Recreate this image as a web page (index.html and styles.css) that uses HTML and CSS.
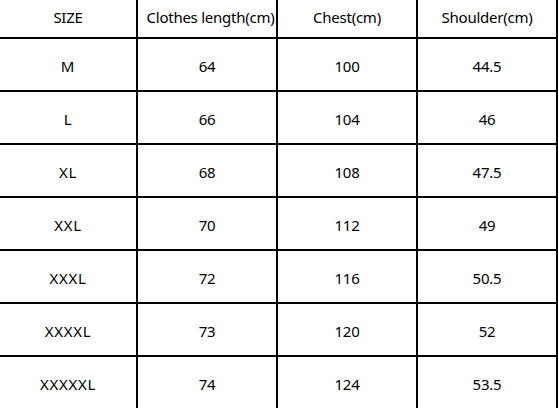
FILE: index.html
```html
<!DOCTYPE html>
<html>
<head>
<meta charset="utf-8">
<link rel="stylesheet" href="styles.css">
</head>
<body>
<div class="table">
  <div class="row head">
    <div class="cell c1">SIZE</div>
    <div class="cell wide">Clothes length(cm)</div>
    <div class="cell">Chest(cm)</div>
    <div class="cell">Shoulder(cm)</div>
  </div>
  <div class="row"><div class="cell c1">M</div><div class="cell">64</div><div class="cell">100</div><div class="cell">44.5</div></div>
  <div class="row"><div class="cell c1">L</div><div class="cell">66</div><div class="cell">104</div><div class="cell">46</div></div>
  <div class="row"><div class="cell c1">XL</div><div class="cell">68</div><div class="cell">108</div><div class="cell">47.5</div></div>
  <div class="row"><div class="cell c1">XXL</div><div class="cell">70</div><div class="cell">112</div><div class="cell">49</div></div>
  <div class="row"><div class="cell c1">XXXL</div><div class="cell">72</div><div class="cell">116</div><div class="cell">50.5</div></div>
  <div class="row"><div class="cell c1">XXXXL</div><div class="cell">73</div><div class="cell">120</div><div class="cell">52</div></div>
  <div class="row"><div class="cell c1">XXXXXL</div><div class="cell">74</div><div class="cell">124</div><div class="cell">53.5</div></div>
</div>
</body>
</html>
```
FILE: styles.css
```css
html, body {
  margin: 0;
  padding: 0;
  background: #fff;
}
body {
  width: 559px;
  height: 408px;
  overflow: hidden;
  font-family: "Noto Sans", "Open Sans", sans-serif;
  font-size: 15px;
  letter-spacing: -0.25px;
  color: #000;
}
.table {
  display: flex;
  flex-direction: column;
}
.row {
  display: grid;
  grid-template-columns: 138px 140px 140px 140px;
  height: 53px;
}
.row.head {
  height: 39px;
}
.cell {
  border-right: 2px solid #000;
  border-bottom: 2px solid #000;
  display: flex;
  align-items: center;
  justify-content: center;
  padding-top: 2px;
  white-space: nowrap;
}
.head .cell {
  padding-top: 0;
  padding-bottom: 3px;
}
.head .wide {
  padding-left: 7px;
}
.row:not(.head) .c1 {
  letter-spacing: 0.7px;
}
```
